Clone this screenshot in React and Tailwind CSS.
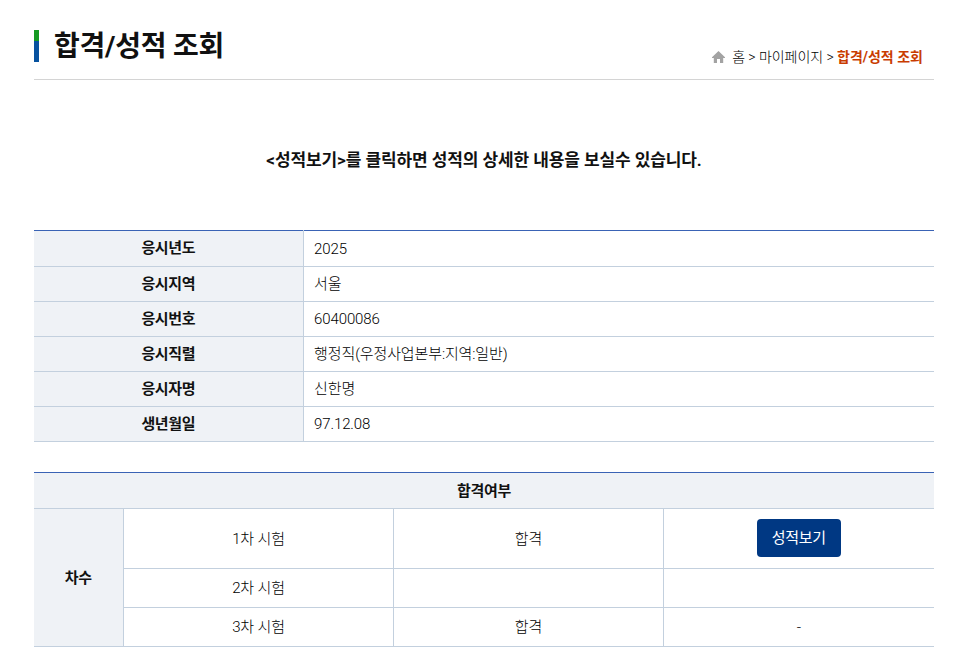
const font = "font-['Roboto','Noto_Sans_CJK_KR',sans-serif]";

function HomeIcon() {
  return (
    <svg width="13" height="12" viewBox="0 0 13 12" className="mr-[7px]" aria-hidden="true">
      <path d="M6.5 0 L13 6.2 L13 7 L11.2 7 L11.2 12 L8 12 L8 8 L5 8 L5 12 L1.8 12 L1.8 7 L0 7 L0 6.2 Z" fill="#a3a3a3" />
    </svg>
  );
}

const info = [
  ["응시년도", "2025"],
  ["응시지역", "서울"],
  ["응시번호", "60400086"],
  ["응시직렬", "행정직(우정사업본부:지역:일반)"],
  ["응시자명", "신한명"],
  ["생년월일", "97.12.08"],
];

const cell = "border-b border-[#c3d0de] text-center text-[15px] tracking-[-0.15px] font-light text-[#000] p-0";

export default function App() {
  return (
    <div className={`${font} w-[963px] h-[666px] overflow-hidden bg-white text-[#111] pl-[34px] pr-[29px]`}>
      <div className="flex items-end justify-between h-[80px] border-b border-[#d4d4d4] pr-[11px]">
        <div className="flex items-start self-start mt-[30px] h-[32px]">
          <div className="w-[5px] h-[32px] bg-[linear-gradient(#159a22_0,#159a22_33%,#07529f_33%,#07529f_100%)]" />
          <h1 className="ml-[15px] mt-[2px] text-[28px] leading-[30px] tracking-[-0.25px] font-bold text-[#111]">합격/성적 조회</h1>
        </div>
        <div className="flex items-center h-[20px] mb-[12px] text-[14px] leading-[20px] text-[#000]">
          <HomeIcon />
          <span className="font-light tracking-[-0.05px]">홈 &gt; 마이페이지 &gt;&nbsp;</span>
          <strong className="font-bold text-[#c93c00]">합격/성적 조회</strong>
        </div>
      </div>

      <p className="mt-[68px] h-[24px] text-center text-[17px] leading-[24px] tracking-[-0.1px] font-bold text-[#111]">
        &lt;성적보기&gt;를 클릭하면 성적의 상세한 내용을 보실수 있습니다.
      </p>

      <table className="mt-[58px] w-[900px] table-fixed border-collapse border-t border-[#3a63b5]">
        <colgroup>
          <col className="w-[269px]" />
          <col />
        </colgroup>
        <tbody>
          {info.map(([k, v], i) => (
            <tr key={k} className={i === 0 ? "h-[36px]" : "h-[35px]"}>
              <th className="border-b border-r border-[#c3d0de] bg-[#eff2f6] text-center text-[15px] tracking-[-0.4px] font-bold text-[#111] p-0">{k}</th>
              <td className={`${i === 0 ? "pt-[2px]" : "pt-0"} border-b border-[#c3d0de] pl-[10.6px] pr-0 pb-0 text-left text-[15px] tracking-[-0.12px] font-light text-[#000]`}>{v}</td>
            </tr>
          ))}
        </tbody>
      </table>

      <table className="mt-[30px] w-[900px] table-fixed border-collapse border-t border-[#3a63b5]">
        <colgroup>
          <col className="w-[89px]" />
          <col className="w-[270px]" />
          <col className="w-[270px]" />
          <col />
        </colgroup>
        <tbody>
          <tr className="h-[36px]">
            <th colSpan={4} className="border-b border-[#c3d0de] bg-[#eff2f6] pt-[2px] text-center text-[15px] tracking-[-0.35px] font-bold text-[#111]">합격여부</th>
          </tr>
          <tr className="h-[60px]">
            <th rowSpan={3} className="border-b border-r border-[#c3d0de] bg-[#eff2f6] pt-[2px] text-center text-[15px] tracking-[-0.35px] font-bold text-[#111]">차수</th>
            <td className={`${cell} border-r !pt-[2px] !pl-[1px]`}>1차 시험</td>
            <td className={`${cell} border-r !pt-[2px] !pl-[1px]`}>합격</td>
            <td className="border-b border-[#c3d0de] pt-[10px] pb-[11px] align-top text-center">
              <button className="mx-auto flex items-center justify-center w-[84px] h-[38px] rounded-[4px] bg-[#003883] text-[15px] tracking-[-0.3px] font-normal text-white">성적보기</button>
            </td>
          </tr>
          <tr className="h-[39px]">
            <td className={`${cell} border-r !pl-[1px]`}>2차 시험</td>
            <td className={`${cell} border-r`}></td>
            <td className={cell}></td>
          </tr>
          <tr className="h-[39px]">
            <td className={`${cell} border-r !pl-[1px]`}>3차 시험</td>
            <td className={`${cell} border-r !pl-[1px]`}>합격</td>
            <td className={cell}>-</td>
          </tr>
        </tbody>
      </table>
    </div>
  );
}
